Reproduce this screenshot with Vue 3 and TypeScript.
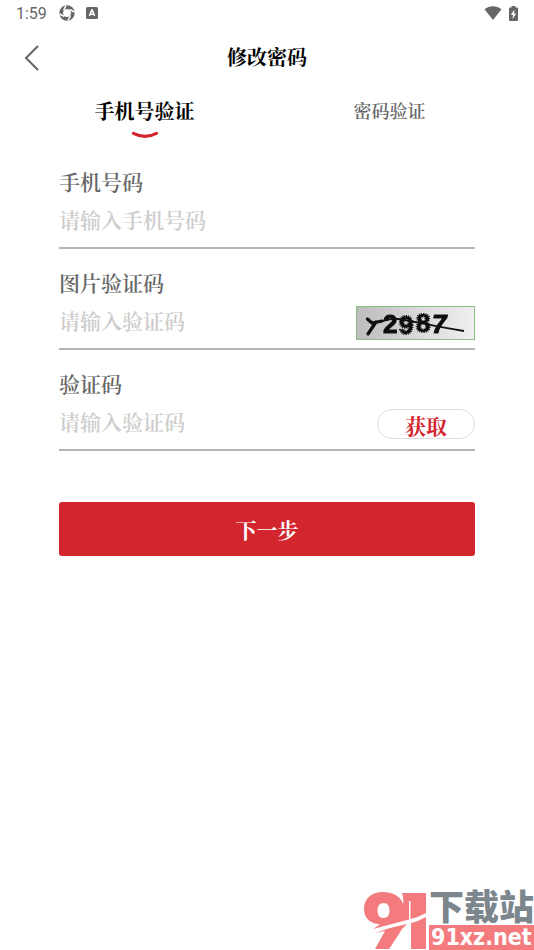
<script setup lang="ts">
import { ref } from 'vue'

type TabKey = 'phone' | 'password'

const tabs: { key: TabKey; label: string }[] = [
  { key: 'phone', label: '手机号验证' },
  { key: 'password', label: '密码验证' },
]
const active = ref<TabKey>('phone')
const phone = ref('')
const captcha = ref('')
const code = ref('')
</script>

<template>
  <div class="screen">
    <div class="status">
      <span class="time">1:59</span>
      <svg class="swirl" width="16" height="16" viewBox="0 0 16 16" aria-hidden="true">
        <circle cx="8" cy="8" r="7.7" fill="#666" />
        <path d="M8 3.800 11 5.200 12.200 8 10.800 11 8 12.200 5 10.800 3.800 8 5.200 5Z" fill="#fff" />
        <path d="M4.500 5.500 7 .5M10.500 4.500 15.500 7M11.500 10.500 9 15.500M5.500 11.500 .5 9" stroke="#fff" stroke-width="1.500" />
      </svg>
      <svg class="badge" width="12" height="12" viewBox="0 0 12 12" aria-hidden="true">
        <rect width="12" height="12" rx="1.5" fill="#666" />
        <path d="M3.4 9 5.7 3h.6l2.3 6M4.4 7.2h3.2" fill="none" stroke="#fff" stroke-width="1.500" />
      </svg>
      <svg class="wifi" width="18" height="14" viewBox="0 0 18 14" aria-hidden="true">
        <path d="M.5 3.2C5.5-.7 12.500-.7 17.500 3.200L9 14Z" fill="#666" />
      </svg>
      <svg width="9" height="15" viewBox="0 0 9 15" aria-hidden="true">
        <path d="M2.600 0h3.800v1.500H8q1 0 1 1V14q0 1-1 1H1q-1 0-1-1V2.500q0-1 1-1h1.600Z" fill="#666" />
        <path d="M5.500 3.500 1.800 8.800h2.200L3.500 13l3.700-5.500H5Z" fill="#fff" />
      </svg>
    </div>

    <header class="nav">
      <button class="back" type="button" aria-label="返回">
        <svg width="16" height="28" viewBox="0 0 16 28" aria-hidden="true">
          <path d="M14 2 2 14l12 12" fill="none" stroke="#666" stroke-width="2" />
        </svg>
      </button>
      <h1>修改密码</h1>
    </header>

    <nav class="tabs">
      <button
        v-for="tab in tabs"
        :key="tab.key"
        type="button"
        class="tab"
        :class="{ active: active === tab.key }"
        @click="active = tab.key"
      >
        <span>{{ tab.label }}</span>
        <svg v-if="active === tab.key" width="28" height="8" viewBox="0 0 28 8" aria-hidden="true">
          <path d="M2.500 2.300Q14 8.300 25.500 2.300" fill="none" stroke="#d2252e" stroke-width="3.200" stroke-linecap="round" />
        </svg>
      </button>
    </nav>

    <form class="form" @submit.prevent>
      <div class="field">
        <label for="phone">手机号码</label>
        <div class="entry">
          <input id="phone" v-model="phone" type="tel" placeholder="请输入手机号码" />
        </div>
      </div>

      <div class="field">
        <label for="captcha">图片验证码</label>
        <div class="entry">
          <input id="captcha" v-model="captcha" type="text" placeholder="请输入验证码" />
          <svg class="captcha" width="119" height="34" viewBox="0 0 119 34" role="img" aria-label="72987">
            <defs>
              <linearGradient id="paper" x1="0" y1="0" x2="1" y2="0">
                <stop offset="0" stop-color="#bcbcbc" />
                <stop offset="0.450" stop-color="#d5d4d6" />
                <stop offset="1" stop-color="#f1eff1" />
              </linearGradient>
              <filter id="ink" x="-20%" y="-20%" width="140%" height="140%">
                <feGaussianBlur stdDeviation="0.600" />
              </filter>
            </defs>
            <rect x="0.500" y="0.500" width="118" height="33" fill="url(#paper)" stroke="#86c17e" />
            <g class="ink" filter="url(#ink)">
              <path d="M11.500 13 16 17l10-2M20 16 12 28" fill="none" stroke="#111" stroke-width="3.200" stroke-linecap="round" />
              <text x="27" y="27">2</text>
              <text class="fuzzy" x="43" y="28">9</text>
              <text class="fuzzy" x="60" y="26">8</text>
              <text class="slant" x="76" y="27">7</text>
            </g>
            <path d="M15 17C24 17 31 12 42 13S75 20 108 25" fill="none" stroke="#111" stroke-width="1.800" />
          </svg>
        </div>
      </div>

      <div class="field">
        <label for="code">验证码</label>
        <div class="entry">
          <input id="code" v-model="code" type="text" placeholder="请输入验证码" />
          <button class="fetch" type="button">获取</button>
        </div>
      </div>

      <button class="submit" type="submit">下一步</button>
    </form>

    <div class="mark">
      <svg width="65" height="58" viewBox="0 0 65 58" aria-hidden="true">
        <path
          fill="#f37b7d"
          fill-rule="evenodd"
          d="M19 0C30 0 37 5 39 12 40 9 39 5 38 1H62V21Q55 25 46.500 27V9H45V27.500L9 37C12 35 15 33 16 32 5 32 0 25 0 17 0 7 7 0 19 0ZM19.500 11C15.500 11 13.500 14 13.500 18.500S15.500 26 19.500 26 25.500 23 25.500 18.500 23.500 11 19.500 11Z"
        />
        <path fill="#f37b7d" d="M62 25V57H47V31Q55 29 62 25ZM43 32Q38 36 35 42L25 57H11L21 39 11 41Q27 35 43 32Z" />
      </svg>
      <div class="words">
        <span class="site">下载站</span>
        <span class="domain">91xz.net</span>
      </div>
    </div>
  </div>
</template>

<style>
body {
  margin: 0;
  background: #fff;
}
</style>

<style scoped>
.screen {
  position: relative;
  box-sizing: border-box;
  min-height: 100vh;
  overflow: hidden;
  color: #666;
  font-family: "Noto Serif CJK SC", "Noto Sans CJK SC", serif;
}
button,
input {
  margin: 0;
  padding: 0;
  border: 0;
  background: none;
  font: inherit;
  color: inherit;
}
button {
  cursor: pointer;
}
svg {
  display: block;
  flex: none;
}
.status {
  display: flex;
  align-items: center;
  height: 26px;
  padding: 0 16px;
}
.time {
  padding-top: 2px;
  font: 16px/26px Roboto, sans-serif;
}
.swirl {
  margin-left: 12px;
}
.badge {
  margin-left: 11px;
}
.wifi {
  margin-left: auto;
  margin-right: 7px;
}
.nav {
  display: grid;
  grid-template-columns: 40px 1fr 40px;
  align-items: center;
  height: 62px;
  padding: 0 24px;
}
.back {
  justify-self: start;
  padding-top: 2px;
}
h1 {
  margin: 0;
  color: #000;
  font-size: 20px;
  line-height: 28px;
  font-weight: 700;
  text-align: center;
}
.tabs {
  display: flex;
  align-items: flex-start;
  height: 76px;
  padding: 0 22px;
}
.tab {
  display: flex;
  flex: 1;
  flex-direction: column;
  align-items: center;
  padding-top: 8px;
  font-size: 18px;
  line-height: 28px;
  font-weight: 600;
}
.tab.active {
  padding-top: 9px;
  color: #000;
  font-size: 20px;
  font-weight: 700;
}
.tab svg {
  margin-top: 6px;
}
.form {
  padding: 0 59px;
}
.field {
  height: 85px;
  margin-bottom: 16px;
  box-sizing: border-box;
  border-bottom: 2px solid #b5b5b5;
}
.field label {
  display: block;
  font-size: 21px;
  line-height: 34px;
  font-weight: 600;
}
.entry {
  display: flex;
  align-items: flex-start;
  height: 44px;
}
.entry input {
  flex: 1;
  min-width: 0;
  height: 42px;
  outline: none;
  font-size: 21px;
  font-weight: 600;
}
.entry input::placeholder {
  color: #ccc;
  opacity: 1;
}
.captcha {
  margin-top: 7px;
}
.ink text {
  fill: #111;
  stroke: #111;
  font: 700 26px "Liberation Sans", sans-serif;
}
.ink .fuzzy {
  stroke-width: 2px;
  stroke-dasharray: 1 1;
}
.ink .slant {
  font-style: italic;
}
.fetch {
  box-sizing: border-box;
  width: 98px;
  height: 30px;
  margin-top: 9px;
  padding-top: 3px;
  border: 1px solid #ddd;
  border-radius: 15px;
  color: #d2252e;
  font-size: 21px;
  line-height: 25px;
  font-weight: 700;
}
.submit {
  display: block;
  width: 100%;
  height: 54px;
  margin-top: 51px;
  border-radius: 3px;
  background: #d2252e;
  color: #fff;
  font-size: 21px;
  font-weight: 700;
}
.mark {
  position: absolute;
  right: 0;
  bottom: 0;
  display: flex;
  align-items: flex-end;
}
.words {
  display: flex;
  flex-direction: column;
}
.site {
  margin-bottom: 3px;
  color: #7c868d;
  font: 900 35px/34px "Noto Sans CJK SC", sans-serif;
}
.domain {
  padding: 0 2px;
  background: #f37b7d;
  color: #fff;
  font: 700 23px/25px "DejaVu Sans Condensed", "DejaVu Sans", sans-serif;
}
</style>
